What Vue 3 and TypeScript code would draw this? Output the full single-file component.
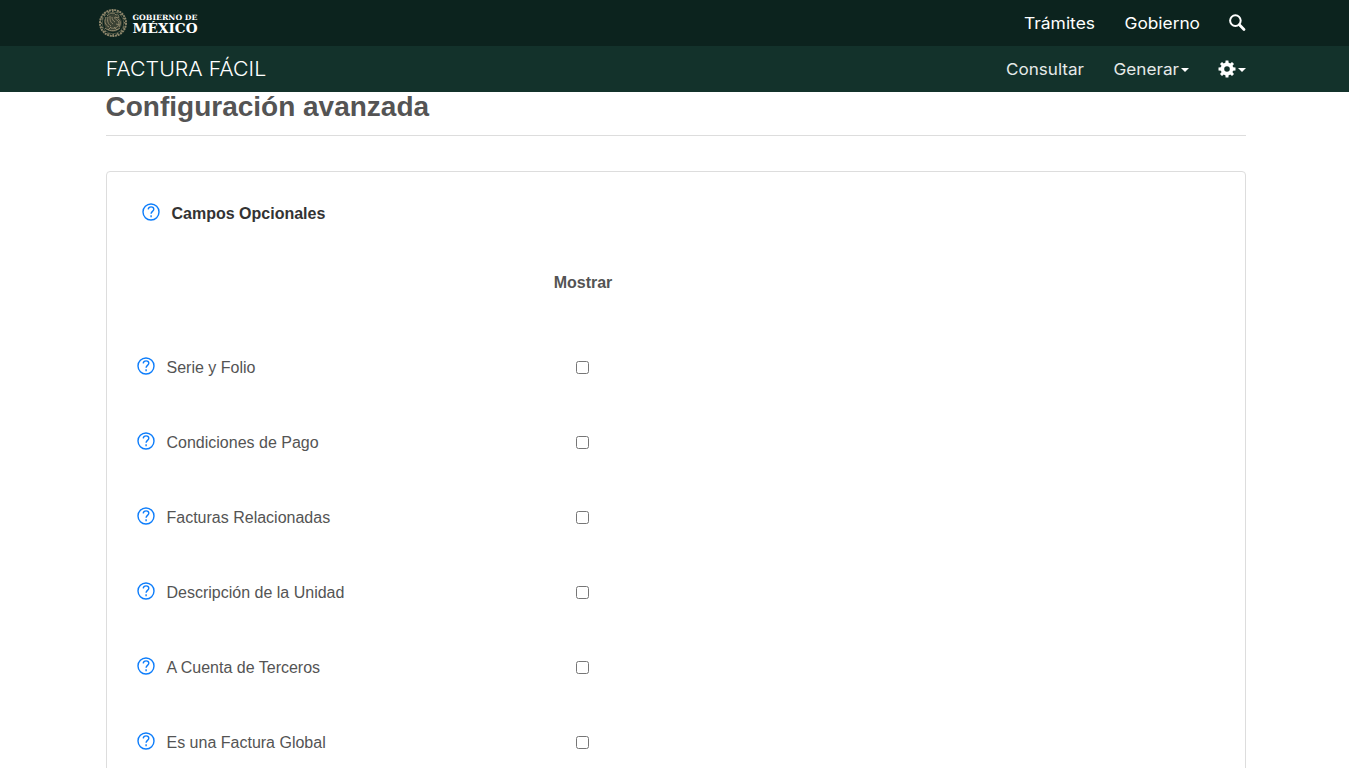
<script setup lang="ts">
import { ref } from 'vue'

interface Field {
  label: string
  shown: boolean
}

const fields = ref<Field[]>([
  { label: 'Serie y Folio', shown: false },
  { label: 'Condiciones de Pago', shown: false },
  { label: 'Facturas Relacionadas', shown: false },
  { label: 'Descripción de la Unidad', shown: false },
  { label: 'A Cuenta de Terceros', shown: false },
  { label: 'Es una Factura Global', shown: false },
])

const teeth = [0, 45, 90, 135, 180, 225, 270, 315]
const leaves = Array.from({ length: 16 }, (_, i) => i * 22.5)
</script>

<template>
  <div class="page">
    <header class="top-bar">
      <a class="brand">
        <svg class="seal" viewBox="0 0 30 30">
          <circle cx="15" cy="15" r="9" fill="#3b4234" />
          <circle cx="15" cy="15" r="13" class="seal-rim" />
          <circle cx="15" cy="15" r="10.8" class="seal-ring" />
          <g v-for="a in leaves" :key="a" :transform="`rotate(${a} 15 15)`">
            <path d="M14 3.9 16.2 2.6" class="seal-line" />
          </g>
          <path d="M9 8c3-3 7-4 9-1 2-1 4 1 2 3l-3-1c-2 2 4 3 4 6 0 4-4 6-8 5M8 9c-2 4-1 8 3 10M10 9c-1 4 0 7 3 9M12 8c0 4 0 6 3 8M14 9c0 2 1 4 3 5M7 20c3 3 10 4 15 0M10 22l3-3M16 19l3 3M20 11c3 2 3 5 1 8M18 16l4 1" class="seal-line" />
        </svg>
        <svg class="wordmark" width="68" height="28" viewBox="0 0 68 28">
          <text x="0.5" y="10.5" class="word-small" textLength="65" lengthAdjust="spacingAndGlyphs">GOBIERNO DE</text>
          <text x="0.5" y="24" class="word-big" textLength="65" lengthAdjust="spacingAndGlyphs">MÉXICO</text>
        </svg>
      </a>
      <nav class="links">
        <svg class="label" width="71" height="24"><text x="0" y="18" textLength="71" lengthAdjust="spacingAndGlyphs">Trámites</text></svg>
        <svg class="label gap" width="75" height="24"><text x="-0.5" y="18" textLength="75.5" lengthAdjust="spacingAndGlyphs">Gobierno</text></svg>
        <svg class="search" width="18" height="18" viewBox="0 0 18 18">
          <circle cx="7.4" cy="6.6" r="5.3" fill="none" stroke="#fff" stroke-width="2" />
          <path d="M11.4 10.8 16 15.4" stroke="#fff" stroke-width="2.8" stroke-linecap="round" />
        </svg>
      </nav>
    </header>

    <div class="sub-bar">
      <svg class="label app-name" width="162" height="28"><text x="-1.3" y="20.5" textLength="160.5" lengthAdjust="spacingAndGlyphs">FACTURA FÁCIL</text></svg>
      <nav class="links">
        <svg class="label soft" width="78" height="24"><text x="0" y="18" textLength="78" lengthAdjust="spacingAndGlyphs">Consultar</text></svg>
        <svg class="label soft gap" width="66" height="24"><text x="-0.5" y="18" textLength="65.5" lengthAdjust="spacingAndGlyphs">Generar</text></svg>
        <span class="caret"></span>
        <svg class="cog" width="18" height="18" viewBox="0 0 18 18">
          <circle cx="9" cy="9" r="4.6" fill="none" stroke="#fff" stroke-width="3.6" />
          <path v-for="t in teeth" :key="t" d="M7.3 3.5 7.6.5h2.8l.3 3z" fill="#fff" :transform="`rotate(${t} 9 9)`" />
        </svg>
        <span class="caret"></span>
      </nav>
    </div>

    <main class="content">
      <h1>Configuración avanzada</h1>
      <section class="panel">
        <h2 class="panel-title">
          <svg class="help" viewBox="0 0 18 18">
            <circle cx="9" cy="9" r="8" />
            <path d="M6.2 6.4c.2-1.8 1.3-2.5 2.9-2.5 1.6 0 2.7.9 2.7 2.3 0 2-2.7 2.4-2.7 4.5" />
            <path d="M9.1 12.3v1.9" />
          </svg>
          <span>Campos Opcionales</span>
        </h2>
        <div class="columns"><span></span><strong>Mostrar</strong></div>
        <div v-for="field in fields" :key="field.label" class="row">
          <label class="name">
            <svg class="help" viewBox="0 0 18 18">
              <circle cx="9" cy="9" r="8" />
              <path d="M6.2 6.4c.2-1.8 1.3-2.5 2.9-2.5 1.6 0 2.7.9 2.7 2.3 0 2-2.7 2.4-2.7 4.5" />
              <path d="M9.1 12.3v1.9" />
            </svg>
            <span>{{ field.label }}</span>
          </label>
          <input v-model="field.shown" type="checkbox" />
        </div>
      </section>
    </main>
  </div>
</template>

<style>
html,
body {
  overflow: hidden;
  background: #fff;
}
</style>

<style scoped>
.page {
  height: 768px;
  overflow: hidden;
  font: 16px/24px 'Liberation Sans', Arial, sans-serif;
  color: #545454;
}
.top-bar,
.sub-bar {
  box-sizing: border-box;
  height: 46px;
  padding: 0 103px 0 98px;
  display: flex;
  justify-content: space-between;
  align-items: center;
}
.top-bar {
  background: #0c231e;
}
.sub-bar {
  background: #13322b;
  padding-left: 107px;
}
.brand {
  display: flex;
  align-items: center;
}
.seal {
  width: 30px;
  height: 30px;
}
.seal-rim,
.seal-ring,
.seal-line {
  fill: none;
  stroke: #8d866b;
}
.seal-rim {
  stroke-width: 2;
  stroke-dasharray: 2 0.7;
}
.seal-ring {
  stroke-width: 0.8;
  stroke: #5d604b;
}
.seal-line {
  stroke-width: 1;
}
.wordmark {
  margin-left: 4px;
  fill: #fff;
  font-family: 'DejaVu Serif', serif;
  font-weight: 700;
}
.word-small {
  font-size: 7.3px;
}
.word-big {
  font-size: 12.3px;
}
.links {
  display: flex;
  align-items: center;
}
.label {
  display: block;
  overflow: visible;
  fill: #fff;
  font: 16px Inter, sans-serif;
}
.label.soft {
  fill: #e6eae9;
}
.gap {
  margin-left: 30px;
}
.app-name {
  font-size: 20px;
  font-weight: 300;
}
.search {
  margin: -1px 0 0 28px;
}
.caret {
  margin: 1px 0 0 1px;
  border: 4px solid transparent;
  border-top-color: #fff;
  border-bottom: 0;
}
.cog {
  margin-left: 29px;
  margin-right: 1px;
}
.content {
  width: 1140px;
  margin-left: 106px;
}
h1 {
  box-sizing: border-box;
  height: 44px;
  margin: 0 0 35px;
  border-bottom: 1px solid #ddd;
  font-size: 28px;
  line-height: 30px;
  text-indent: -0.5px;
}
.panel {
  box-sizing: border-box;
  height: 640px;
  padding: 30px;
  border: 1px solid #ddd;
  border-radius: 4px;
}
.panel-title {
  display: flex;
  align-items: center;
  gap: 11.5px;
  height: 24px;
  margin: 0 0 0 5px;
  color: #333;
  font-size: 16px;
}
.help {
  width: 18px;
  height: 18px;
  margin-top: -4px;
  fill: none;
  stroke: #0d7dfb;
  stroke-width: 1.4;
}
.name .help {
  margin-top: -3px;
}
.columns,
.row {
  display: grid;
  grid-template-columns: 402px 87px;
  align-items: center;
  justify-items: center;
}
.columns {
  grid-template-columns: 402px 88px;
  height: 24px;
  margin: 45px 0 35px;
}
.row {
  height: 75px;
}
.name {
  justify-self: start;
  display: flex;
  align-items: center;
  gap: 11.5px;
}
.row input {
  width: 13px;
  height: 13px;
  margin: 0;
}
</style>
